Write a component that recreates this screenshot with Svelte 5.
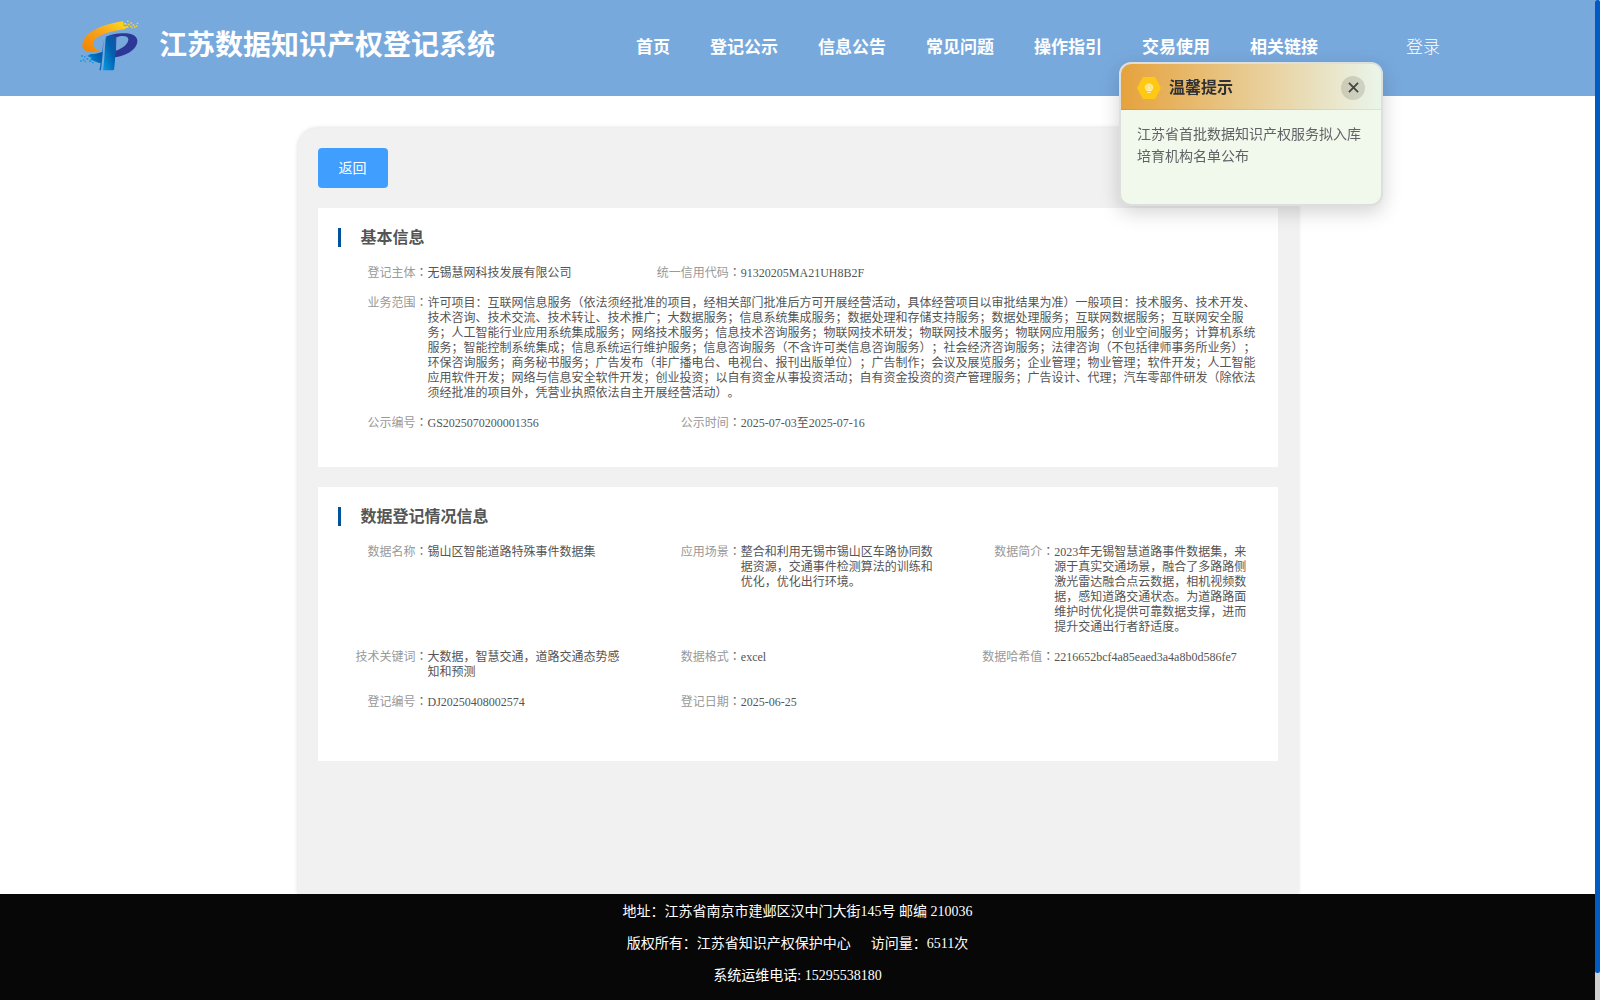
<script>
  const nav = ['首页', '登记公示', '信息公告', '常见问题', '操作指引', '交易使用', '相关链接'];

  const basic = [
    { label: '登记主体', value: '无锡慧网科技发展有限公司' },
    { label: '统一信用代码', value: '91320205MA21UH8B2F' },
    {
      label: '业务范围', wide: true,
      value: '许可项目：互联网信息服务（依法须经批准的项目，经相关部门批准后方可开展经营活动，具体经营项目以审批结果为准）一般项目：技术服务、技术开发、技术咨询、技术交流、技术转让、技术推广；大数据服务；信息系统集成服务；数据处理和存储支持服务；数据处理服务；互联网数据服务；互联网安全服务；人工智能行业应用系统集成服务；网络技术服务；信息技术咨询服务；物联网技术研发；物联网技术服务；物联网应用服务；创业空间服务；计算机系统服务；智能控制系统集成；信息系统运行维护服务；信息咨询服务（不含许可类信息咨询服务）；社会经济咨询服务；法律咨询（不包括律师事务所业务）；环保咨询服务；商务秘书服务；广告发布（非广播电台、电视台、报刊出版单位）；广告制作；会议及展览服务；企业管理；物业管理；软件开发；人工智能应用软件开发；网络与信息安全软件开发；创业投资；以自有资金从事投资活动；自有资金投资的资产管理服务；广告设计、代理；汽车零部件研发（除依法须经批准的项目外，凭营业执照依法自主开展经营活动）。',
    },
    { label: '公示编号', value: 'GS2025070200001356' },
    { label: '公示时间', value: '2025-07-03至2025-07-16' },
  ];

  const register = [
    { label: '数据名称', value: '锡山区智能道路特殊事件数据集' },
    { label: '应用场景', value: '整合和利用无锡市锡山区车路协同数据资源，交通事件检测算法的训练和优化，优化出行环境。' },
    { label: '数据简介', value: '2023年无锡智慧道路事件数据集，来源于真实交通场景，融合了多路路侧激光雷达融合点云数据，相机视频数据，感知道路交通状态。为道路路面维护时优化提供可靠数据支撑，进而提升交通出行者舒适度。' },
    { label: '技术关键词', value: '大数据，智慧交通，道路交通态势感知和预测' },
    { label: '数据格式', value: 'excel' },
    { label: '数据哈希值', value: '2216652bcf4a85eaed3a4a8b0d586fe7' },
    { label: '登记编号', value: 'DJ20250408002574' },
    { label: '登记日期', value: '2025-06-25' },
  ];

  let tipOpen = $state(true);
</script>

{#snippet fields(items)}
  <dl class="fields">
    {#each items as item}
      <div class="field" class:wide={item.wide}>
        <dt>{item.label}<span class="colon">：</span></dt>
        <dd>{item.value}</dd>
      </div>
    {/each}
  </dl>
{/snippet}

<div class="page">
  <header>
    <svg class="logo" viewBox="30 26 180 156" aria-hidden="true">
      <defs>
        <linearGradient id="lg-orange" x1="0" y1="1" x2="1" y2="0">
          <stop offset="0" stop-color="#f08200" />
          <stop offset=".5" stop-color="#f8a11c" />
          <stop offset="1" stop-color="#ffdc1e" />
        </linearGradient>
        <linearGradient id="lg-blue" x1="0" y1="1" x2="1" y2="0">
          <stop offset="0" stop-color="#0a9be0" />
          <stop offset=".6" stop-color="#0061b0" />
          <stop offset="1" stop-color="#1c4ea0" />
        </linearGradient>
      </defs>
      <path fill="url(#lg-orange)" d="M160 33C118 38 66 54 45 82C30 103 36 124 62 125C72 126 82 125 92 122C76 118 66 108 71 95C78 76 120 62 165 57L170 50L160 46Z" />
      <g fill="#ffd21f">
        <path d="M162 38h7v5h-7zM171 31h5v4h-5zM173 40h6v5h-6zM181 36h5v4h-5zM168 47h7v5h-7zM180 46h5v4h-5zM188 42h5v4h-5zM192 48h5v4h-5zM200 37h5v4h-5zM198 45h4v4h-4zM184 51h5v3h-5z" />
      </g>
      <path fill="#2d3795" fill-rule="evenodd" d="M106 80C124 71 155 66 179 70C201 74 209 91 196 110C184 127 160 137 135 141L136 84ZM139 81L138 121C158 115 175 101 175 87C175 77 158 74 139 81Z" />
      <path fill="url(#lg-blue)" d="M107 82C118 76 128 75 138 76C135 105 138 142 132 178Q131 180 128 180H99C104 148 104 113 107 82Z" />
      <path fill="url(#lg-blue)" d="M101 85L98 132L93 180H88L92 159C80 156 70 151 59 146L66 143L51 137L62 132L50 130C68 133 83 129 97 124Z" />
      <g fill="#1598dc">
        <path d="M33 135h6v4h-6zM42 138h5v4h-5zM49 144h6v4h-6zM38 147h5v4h-5zM30 150h5v4h-5zM58 150h6v5h-6zM66 155h5v4h-5zM44 152h4v4h-4z" />
      </g>
    </svg>
    <h1>江苏数据知识产权登记系统</h1>
    <nav>
      {#each nav as name}
        <a href="#nav">{name}</a>
      {/each}
    </nav>
    <a class="login" href="#login">登录</a>
  </header>

  <main>
    <button class="back" type="button">返回</button>
    <section>
      <h2>基本信息</h2>
      {@render fields(basic)}
    </section>
    <section class="tall">
      <h2>数据登记情况信息</h2>
      {@render fields(register)}
    </section>
  </main>

  <footer>
    <p>地址：江苏省南京市建邺区汉中门大街145号 邮编 210036</p>
    <p><span>版权所有：江苏省知识产权保护中心</span><span class="visits">访问量：6511次</span></p>
    <p>系统运维电话: 15295538180</p>
  </footer>
</div>

{#if tipOpen}
  <aside class="tip">
    <div class="tip-head">
      <svg class="hex" viewBox="0 0 24 22" aria-hidden="true">
        <path fill="#ffc814" d="M6 0H18L24 11L18 22H6L0 11Z" />
        <g fill="none" stroke="#fff3b8">
          <path fill="#ffe27a" d="M10 13.5C7 11.500 8 7 12 7S17 11.500 14 13.500Z" />
          <path d="M10.500 15.500H13.500M12 13V10M11 9.500L12 10.500L13 9.500" />
        </g>
      </svg>
      <strong>温馨提示</strong>
      <button type="button" aria-label="关闭" onclick={() => (tipOpen = false)}>
        <svg viewBox="0 0 12 12" aria-hidden="true"><path d="M1 1L11 11M11 1L1 11" /></svg>
      </button>
    </div>
    <p>江苏省首批数据知识产权服务拟入库培育机构名单公布</p>
  </aside>
{/if}

<div class="scroll"><div class="thumb"></div></div>

<style>
  :global(body){margin:0;background:#fff;font-family:"Liberation Serif","Noto Sans CJK SC",serif;
    text-spacing-trim:space-all}
  h1,h2,p,dl,dd{margin:0}
  a{color:#fff;text-decoration:none}
  .page{display:flex;flex-direction:column;min-height:100vh;margin-right:5px}

  header{display:flex;align-items:center;height:96px;padding-left:80px;box-sizing:border-box;
    background:#78a9dd;color:#fff;white-space:nowrap}
  .logo{width:60px;height:52px;margin-bottom:6px}
  h1{margin:0 0 4px 19px;font-size:28px;line-height:40px;font-weight:700}
  nav{display:flex;gap:40px;margin-left:141px;font-size:17px;line-height:24px;font-weight:700}
  .login{margin-left:88px;font-size:17px;line-height:24px;font-weight:300}

  main{flex:1;width:1000px;max-width:100%;margin:32px auto 0;padding:20px;box-sizing:border-box;
    background:#f1f1f1;border-radius:20px 20px 0 0;box-shadow:0 0 4px rgba(0,0,0,.16)}
  .back{display:block;width:70px;height:40px;padding:0 0 2px;border:0;border-radius:4px;background:#409eff;
    color:#fff;font:inherit;font-size:14px;cursor:pointer}
  section{margin-top:20px;padding:20px 0 36px 20px;background:#fff}
  .tall{padding-bottom:51px}
  h2{padding-left:20px;border-left:3px solid #00529b;color:#555;font-size:16px;line-height:19px;font-weight:700}
  .fields{display:grid;grid-template-columns:repeat(3,1fr);row-gap:15px;margin-top:19px;
    font-size:12px;line-height:15px}
  .field{display:flex;grid-column-end:span 1;min-width:0}
  .field.wide{grid-column:1 / -1}
  dt{flex:none;width:90px;text-align:right;color:#999;white-space:nowrap}
  dd{flex:1;min-width:0;padding-right:20px;color:#555}
  .colon{font-family:"Noto Sans CJK TC",sans-serif;line-height:0;color:#666}

  footer{position:relative;padding:2px 0 8px;background:#070707;color:#fff;font-size:14px;line-height:32px;text-align:center}
  .visits{margin-left:20px}

  .tip{position:fixed;top:62px;right:217px;width:264px;height:144px;box-sizing:border-box;overflow:hidden;
    border:2px solid #dcdfdd;border-radius:12px;background:#f0f9eb;box-shadow:0 6px 20px rgba(0,0,0,.18)}
  .tip-head{display:flex;align-items:center;height:46px;padding:2px 16px 0;box-sizing:border-box;
    border-bottom:1px solid rgba(0,0,0,.06);background:linear-gradient(90deg,#e6a23c,#eaf5ea)}
  .hex{width:24px;height:22px}
  .tip strong{flex:1;margin-left:8px;color:#303133;font-size:16px;line-height:24px}
  .tip button{display:grid;place-items:center;width:24px;height:24px;padding:0;border:0;border-radius:50%;
    background:rgba(0,0,0,.12);cursor:pointer}
  .tip button svg{width:11px;height:11px;fill:none;stroke:#444;stroke-width:2}
  .tip p{padding:14px 16px;color:#606266;font-size:14px;line-height:22px}

  .scroll{position:fixed;top:0;right:0;bottom:0;width:5px;background:#d0d0d0}
  .thumb{height:97.3%;border-radius:2px;background:#005bc5}
</style>
